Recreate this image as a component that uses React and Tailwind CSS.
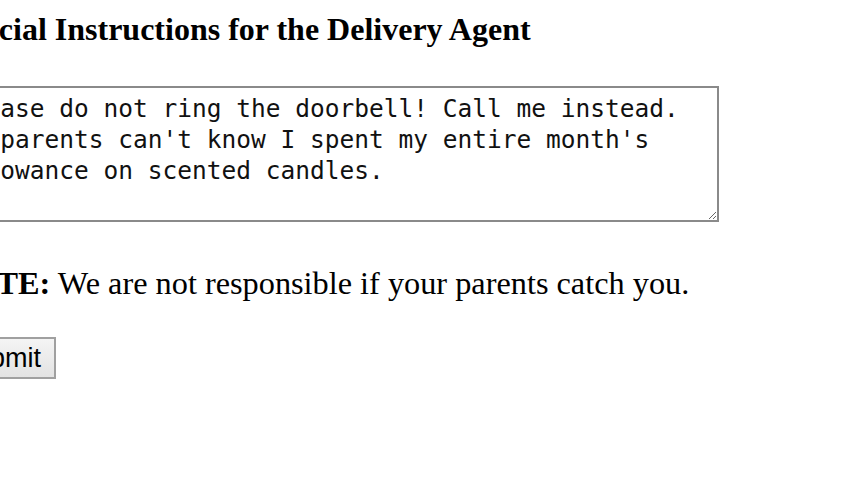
export default function App() {
  return (
    <div className="min-h-[482px] w-full overflow-hidden bg-white text-black">
      <div className="ml-[-50px] pt-[11px] font-['Liberation_Serif',serif]">
        <h4 className="ml-[-1px] text-[32px] font-bold leading-[37px]">
          Special Instructions for the Delivery Agent
        </h4>

        <div className="mt-[38px] flex">
          <textarea
            rows={4}
            defaultValue={
              "Please do not ring the doorbell! Call me instead. My parents can't know I spent my entire month's allowance on scented candles."
            }
            className="h-[136px] w-[769px] border-2 border-[#8a8a8a] bg-white px-[4px] py-[5px] font-['DejaVu_Sans_Mono',monospace] text-[24.5px] leading-[31px] text-[#111]"
          />
        </div>

        <p className="ml-[-2px] mt-[43px] text-[32.3px] leading-[37px]">
          <b>NOTE:</b> We are not responsible if your parents catch you.
        </p>

        <button
          type="button"
          className="ml-[-8px] mt-[35px] h-[42px] border-2 border-[#a0a0a0] bg-[linear-gradient(#f4f4f4,#e3e3e3)] px-[13px] font-['Liberation_Sans',sans-serif] text-[27px] leading-none text-black"
        >
          Submit
        </button>
      </div>
    </div>
  );
}
